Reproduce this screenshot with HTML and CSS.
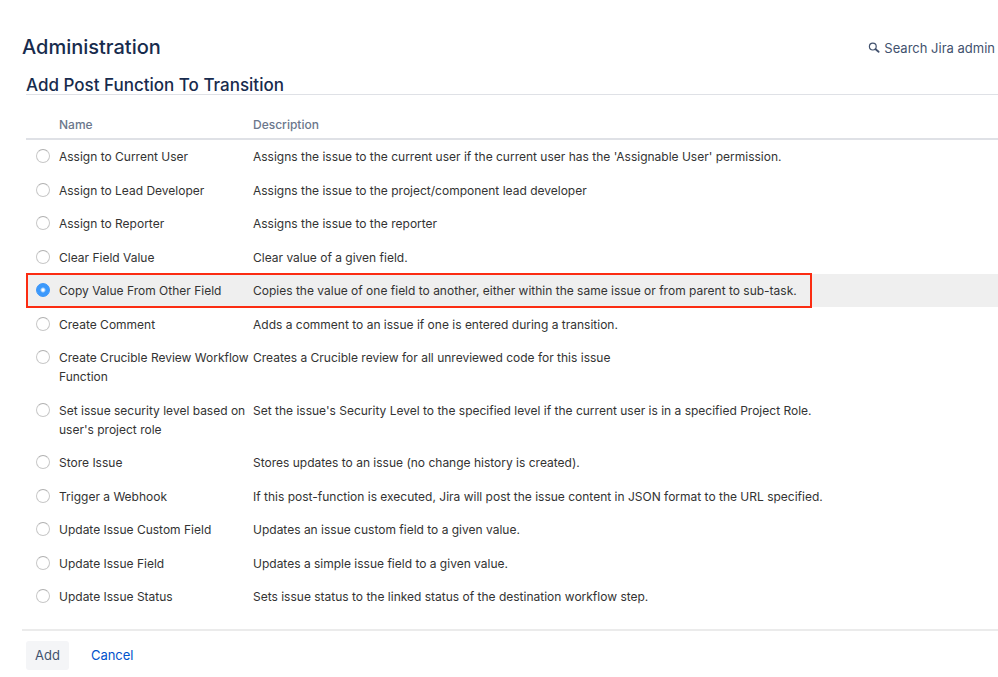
FILE: index.html
```html
<!DOCTYPE html>
<html lang="en">
<head>
  <meta charset="UTF-8" />
  <meta name="viewport" content="width=device-width, initial-scale=1" />
  <title>Add Post Function To Transition</title>
  <link rel="stylesheet" href="styles.css">
</head>
<body>
  <header class="admin-header">
    <h1>Administration</h1>
    <a href="#" class="admin-search">
      <svg class="search-icon" width="12" height="12" viewBox="0 0 12 12" aria-hidden="true">
        <circle cx="4.8" cy="4.6" r="3.4" fill="none" stroke="#42526e" stroke-width="1.2" />
        <path d="M7.6 7.2 L10.6 9.8" stroke="#42526e" stroke-width="1.8" stroke-linecap="round" />
      </svg>
      Search Jira admin
    </a>
  </header>

  <form class="function-form">
    <div class="form-body">
      <h2>Add Post Function To Transition</h2>

      <table class="function-table">
        <thead>
          <tr>
            <th class="col-radio"></th>
            <th class="col-name">Name</th>
            <th>Description</th>
          </tr>
        </thead>
        <tbody>
          <tr>
            <td><input type="radio" name="type" id="f1"></td>
            <td><label for="f1">Assign to Current User</label></td>
            <td>Assigns the issue to the current user if the current user has the 'Assignable User' permission.</td>
          </tr>
          <tr>
            <td><input type="radio" name="type" id="f2"></td>
            <td><label for="f2">Assign to Lead Developer</label></td>
            <td>Assigns the issue to the project/component lead developer</td>
          </tr>
          <tr>
            <td><input type="radio" name="type" id="f3"></td>
            <td><label for="f3">Assign to Reporter</label></td>
            <td>Assigns the issue to the reporter</td>
          </tr>
          <tr>
            <td><input type="radio" name="type" id="f4"></td>
            <td><label for="f4">Clear Field Value</label></td>
            <td>Clear value of a given field.</td>
          </tr>
          <tr class="selected">
            <td><input type="radio" name="type" id="f5" checked></td>
            <td><label for="f5">Copy Value From Other Field</label></td>
            <td>Copies the value of one field to another, either within the same issue or from parent to sub-task.</td>
          </tr>
          <tr>
            <td><input type="radio" name="type" id="f6"></td>
            <td><label for="f6">Create Comment</label></td>
            <td>Adds a comment to an issue if one is entered during a transition.</td>
          </tr>
          <tr>
            <td><input type="radio" name="type" id="f7"></td>
            <td><label for="f7">Create Crucible Review Workflow Function</label></td>
            <td>Creates a Crucible review for all unreviewed code for this issue</td>
          </tr>
          <tr>
            <td><input type="radio" name="type" id="f8"></td>
            <td><label for="f8">Set issue security level based on user's project role</label></td>
            <td>Set the issue's Security Level to the specified level if the current user is in a specified Project Role.</td>
          </tr>
          <tr>
            <td><input type="radio" name="type" id="f9"></td>
            <td><label for="f9">Store Issue</label></td>
            <td>Stores updates to an issue (no change history is created).</td>
          </tr>
          <tr>
            <td><input type="radio" name="type" id="f10"></td>
            <td><label for="f10">Trigger a Webhook</label></td>
            <td>If this post-function is executed, Jira will post the issue content in JSON format to the URL specified.</td>
          </tr>
          <tr>
            <td><input type="radio" name="type" id="f11"></td>
            <td><label for="f11">Update Issue Custom Field</label></td>
            <td>Updates an issue custom field to a given value.</td>
          </tr>
          <tr>
            <td><input type="radio" name="type" id="f12"></td>
            <td><label for="f12">Update Issue Field</label></td>
            <td>Updates a simple issue field to a given value.</td>
          </tr>
          <tr>
            <td><input type="radio" name="type" id="f13"></td>
            <td><label for="f13">Update Issue Status</label></td>
            <td>Sets issue status to the linked status of the destination workflow step.</td>
          </tr>
        </tbody>
      </table>
    </div>

    <div class="form-buttons">
      <button type="button" class="add-button">Add</button>
      <a href="#" class="cancel-link">Cancel</a>
    </div>
  </form>
</body>
</html>
```
FILE: styles.css
```css
body {
  margin: 0;
  padding: 33px 0 0 22px;
  font-family: Inter, "Liberation Sans", sans-serif;
  font-size: 12px;
  line-height: 19px;
  background-color: #fff;
  color: #333;
}

h1, h2 {
  margin: 0;
  font-weight: 500;
  color: #172b4d;
}

h1 {
  font-size: 20px;
  line-height: 28px;
}

h2 {
  font-size: 17px;
  line-height: 18px;
  border-bottom: 1px solid #dfe1e6;
}

.admin-header {
  display: flex;
  justify-content: space-between;
  align-items: center;
  padding-right: 3px;
}

.admin-search {
  display: flex;
  align-items: center;
  gap: 4px;
  padding-top: 2px;
  font-size: 13px;
  color: #42526e;
  text-decoration: none;
}

.form-body {
  padding: 15px 0 16px 4px;
}

.function-table {
  width: 100%;
  margin-top: 16px;
  border-collapse: separate;
  border-spacing: 0;
  table-layout: fixed;
}

.function-table th {
  padding: 4px 0;
  text-align: left;
  font-size: 12px;
  font-weight: 500;
  color: #6b778c;
  border-bottom: 2px solid #dfe1e6;
}

.function-table .col-radio {
  width: 33px;
}

.function-table .col-name {
  width: 190px;
  padding-right: 4px;
}

.function-table td {
  padding: 7px 0;
  vertical-align: top;
}

.function-table tbody tr:nth-child(even) td {
  padding-top: 8px;
}

.function-table .selected {
  background-color: #efefef;
}

/* red frame round the selected function */
.function-table .selected td:first-child {
  position: relative;
}

.function-table .selected td:first-child::after {
  content: "";
  position: absolute;
  top: -1px;
  left: 0;
  width: 786px;
  height: 35px;
  box-sizing: border-box;
  border: 2px solid #fb2c12;
  pointer-events: none;
}

.function-table input {
  appearance: none;
  display: block;
  width: 14px;
  height: 14px;
  margin: 2px 0 0 10px;
  box-sizing: border-box;
  border: 1px solid #c8c8c8;
  border-top-color: #b0b0b0;
  border-radius: 50%;
  background-color: #fff;
}

.function-table input:checked {
  border-color: #3b95f8;
  background: radial-gradient(circle, #fff 1px, #3b99fc 3px);
}

.form-buttons {
  display: flex;
  align-items: center;
  gap: 22px;
  padding: 10px 4px;
  border-top: 2px solid #ebebeb;
}

.add-button {
  padding: 5px 9px;
  border: none;
  border-radius: 3px;
  background-color: #f4f5f7;
  color: #42526e;
  font-family: inherit;
  font-size: 13px;
  line-height: 19px;
  cursor: pointer;
}

.cancel-link {
  font-size: 13px;
  color: #0052cc;
  text-decoration: none;
}
```
